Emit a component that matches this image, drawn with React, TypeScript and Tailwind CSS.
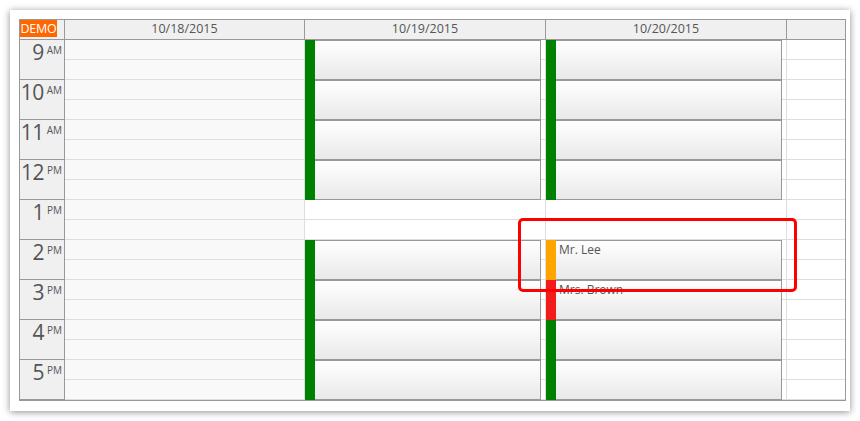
import React from "react";

type Ev = { color: string; text?: string } | null;

const HOURS: [string, string][] = [
  ["9", "AM"],
  ["10", "AM"],
  ["11", "AM"],
  ["12", "PM"],
  ["1", "PM"],
  ["2", "PM"],
  ["3", "PM"],
  ["4", "PM"],
  ["5", "PM"],
];

const G = "#008000";

const col2: Ev[] = [
  { color: G }, { color: G }, { color: G }, { color: G }, null,
  { color: G }, { color: G }, { color: G }, { color: G },
];
const col3: Ev[] = [
  { color: G }, { color: G }, { color: G }, { color: G }, null,
  { color: "#ffa500", text: "Mr. Lee" },
  { color: "#f31c1c", text: "Mrs. Brown" },
  { color: G }, { color: G },
];

function Grid({ white }: { white: boolean }) {
  return (
    <div className="flex flex-col">
      {Array.from({ length: 18 }).map((_, i) => (
        <div
          key={i}
          className={
            "h-[20px] border-r border-b border-[#dddddd] " +
            (white ? "bg-white" : "bg-[#f9f9f9]")
          }
        />
      ))}
    </div>
  );
}

function DayColumn({ width, events, white }: { width: string; events?: Ev[]; white: boolean }) {
  return (
    <div className={"relative " + width}>
      <Grid white={white} />
      {events && (
        <div className="absolute inset-0 flex flex-col">
          {events.map((e, i) =>
            e ? (
              <div key={i} className="h-[40px] w-[236px] flex">
                <div className="w-[10px] h-full" style={{ backgroundColor: e.color }} />
                <div className="flex-1 border-t border-r border-b border-[#999999] bg-linear-to-b from-white to-[#e9e9e9] pl-[3px] text-[12px] leading-[16px] text-[#555] pt-[1px]">
                  {e.text}
                </div>
              </div>
            ) : (
              <div key={i} className="h-[40px]" />
            )
          )}
        </div>
      )}
    </div>
  );
}

export default function App() {
  return (
    <div
      className="w-[860px] h-[421px] bg-white pt-[10px] pl-[10px]"
      style={{ fontFamily: '"Open Sans", "Noto Sans", sans-serif' }}
    >
      <div className="relative w-[840px] h-[401px] bg-white shadow-[0_1px_7px_rgba(0,0,0,0.45)] pt-[9px] pl-[9px]">
        <div className="w-[827px] border border-[#999999]">
          {/* header */}
          <div className="flex h-[20px] text-[#555] text-[12.5px]">
            <div className="w-[45px] border-r border-b border-[#999999] bg-[#f0f0f0]">
              <div className="w-[37px] h-[17px] bg-[#ff6600] text-white text-[12.5px] leading-[17px] flex items-center justify-center tracking-[-0.2px]">
                DEMO
              </div>
            </div>
            {[
              ["w-[240px]", "10/18/2015"],
              ["w-[241px]", "10/19/2015"],
              ["w-[241px]", "10/20/2015"],
            ].map(([w, d]) => (
              <div
                key={d}
                className={w + " border-r border-b border-[#999999] bg-[#f0f0f0] flex items-center justify-center"}
              >
                {d}
              </div>
            ))}
            <div className="flex-1 border-b border-[#999999] bg-[#f0f0f0]" />
          </div>
          {/* body */}
          <div className="flex">
            <div className="w-[45px] flex flex-col">
              {HOURS.map(([h, m]) => (
                <div
                  key={h}
                  className="h-[40px] border-r border-b border-[#999999] bg-[#f0f0f0] flex justify-end items-start text-[#555]"
                >
                  <span className="text-[21px] leading-[21px] pt-[2px] tracking-[-0.5px]">{h}</span>
                  <span className="text-[10px] leading-[10px] pt-[5px] pl-[3px] pr-[2px]">{m}</span>
                </div>
              ))}
            </div>
            <DayColumn width="w-[240px]" white={false} />
            <DayColumn width="w-[241px]" white events={col2} />
            <DayColumn width="w-[241px]" white events={col3} />
            <div className="flex-1">
              <div className="flex flex-col">
                {Array.from({ length: 18 }).map((_, i) => (
                  <div key={i} className="h-[20px] border-b border-[#dddddd] bg-white" />
                ))}
              </div>
            </div>
          </div>
        </div>
        <div className="absolute left-[508px] top-[208px] w-[279px] h-[74px] border-[3px] border-[#ff0000] rounded-[5px]" />
      </div>
    </div>
  );
}
